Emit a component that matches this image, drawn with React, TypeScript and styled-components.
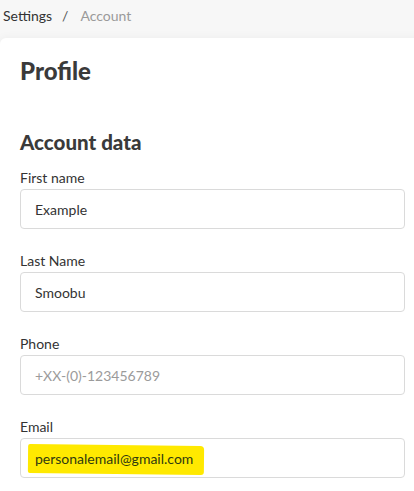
import styled, { createGlobalStyle } from "styled-components";

const GlobalStyle = createGlobalStyle`
    html, body {
        margin: 0;
        padding: 0;
        background: #f7f7f7;
        overflow: hidden;
    }
    body {
        font-family: "Lato", "Open Sans", sans-serif;
        color: #333333;
    }
`;

const Page = styled.div`
    width: 414px;
    height: 491px;
    display: flex;
    flex-direction: column;
`;

const Breadcrumb = styled.nav`
    height: 38px;
    display: flex;
    align-items: flex-start;
    padding: 7px 0 0 3px;
    box-sizing: border-box;
    font-size: 14px;
    gap: 10px;
`;

const Crumb = styled.span<{ $active?: boolean }>`
    color: ${({ $active }) => ($active ? "#9a9a9a" : "#333333")};
`;

const Separator = styled.span`
    color: #555555;
    margin-right: 2px;
`;

const Card = styled.section`
    flex: 1;
    margin-right: -12px;
    background: #ffffff;
    border-radius: 6px 6px 0 0;
    box-shadow: 0 0 10px rgba(0, 0, 0, 0.05);
    padding: 18px 21px 0 20px;
`;

const Title = styled.h1`
    margin: 0;
    font-size: 24px;
    font-weight: 900;
    color: #3a3a3a;
    line-height: 30px;
`;

const SectionTitle = styled.h2`
    margin: 43px 0 0;
    font-size: 20.5px;
    font-weight: 900;
    color: #3a3a3a;
    line-height: 26px;
`;

const Field = styled.div`
    display: flex;
    flex-direction: column;
    margin-top: 14px;
    & + & {
        margin-top: 23px;
    }
`;

const Label = styled.label`
    font-size: 14px;
    line-height: 18px;
    color: #333333;
    margin-bottom: 2px;
`;

const InputBox = styled.div`
    width: 385px;
    height: 40px;
    box-sizing: border-box;
    border: 1px solid #dadada;
    border-radius: 4px;
    display: flex;
    align-items: center;
    padding-left: 14px;
    font-size: 14px;
`;

const Value = styled.span<{ $placeholder?: boolean }>`
    color: ${({ $placeholder }) => ($placeholder ? "#9b9b9b" : "#333333")};
`;

const HighlightWrap = styled.span`
    position: relative;
    z-index: 0;
`;

const Highlight = styled.span`
    position: relative;
    color: #2f3a10;
    &::before {
        content: "";
        position: absolute;
        left: -7px;
        right: -11px;
        top: -5px;
        bottom: -7px;
        background: #ffe900;
        border-radius: 2px 4px 3px 2px;
        transform: rotate(0.6deg);
        z-index: -1;
    }
`;

const fields = [
    { label: "First name", value: "Example" },
    { label: "Last Name", value: "Smoobu" },
    { label: "Phone", value: "+XX-(0)-123456789", placeholder: true },
];

export default function App() {
    return (
        <Page>
            <GlobalStyle />
            <Breadcrumb>
                <Crumb>Settings</Crumb>
                <Separator>/</Separator>
                <Crumb $active>Account</Crumb>
            </Breadcrumb>
            <Card>
                <Title>Profile</Title>
                <SectionTitle>Account data</SectionTitle>
                {fields.map((f) => (
                    <Field key={f.label}>
                        <Label>{f.label}</Label>
                        <InputBox>
                            <Value $placeholder={f.placeholder}>{f.value}</Value>
                        </InputBox>
                    </Field>
                ))}
                <Field>
                    <Label>Email</Label>
                    <InputBox>
                        <HighlightWrap>
                            <Highlight>personalemail@gmail.com</Highlight>
                        </HighlightWrap>
                    </InputBox>
                </Field>
            </Card>
        </Page>
    );
}
